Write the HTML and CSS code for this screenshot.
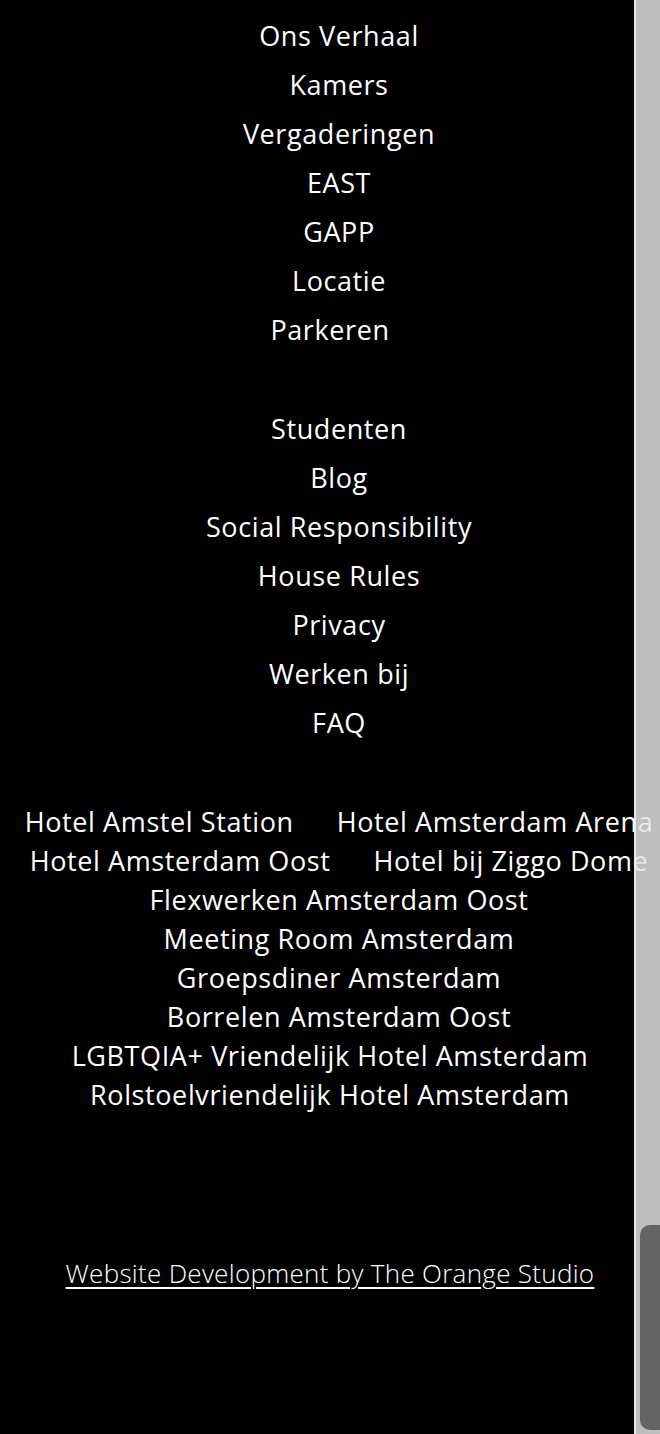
FILE: index.html
```html
<!DOCTYPE html>
<html lang="nl">
<head>
<meta charset="utf-8">
<title>Footer</title>
<link rel="stylesheet" href="styles.css">
</head>
<body>
<div class="page">
  <nav class="footer-nav">
    <ul class="menu">
      <li class="item shift"><a href="#">Ons Verhaal</a></li>
      <li class="item shift"><a href="#">Kamers</a></li>
      <li class="item shift"><a href="#">Vergaderingen</a></li>
      <li class="item shift"><a href="#">EAST</a></li>
      <li class="item shift"><a href="#">GAPP</a></li>
      <li class="item shift"><a href="#">Locatie</a></li>
      <li class="item"><a href="#">Parkeren</a></li>
    </ul>
    <ul class="menu menu-second">
      <li class="item shift"><a href="#">Studenten</a></li>
      <li class="item shift"><a href="#">Blog</a></li>
      <li class="item shift"><a href="#">Social Responsibility</a></li>
      <li class="item shift"><a href="#">House Rules</a></li>
      <li class="item shift"><a href="#">Privacy</a></li>
      <li class="item shift"><a href="#">Werken bij</a></li>
      <li class="item shift"><a href="#">FAQ</a></li>
    </ul>
    <div class="hotels">
      <div class="hotel-row shift"><a href="#">Hotel Amstel Station</a><a href="#">Hotel Amsterdam Arena</a></div>
      <div class="hotel-row shift"><a href="#">Hotel Amsterdam Oost</a><a href="#">Hotel bij Ziggo Dome</a></div>
      <div class="hotel-row shift"><a href="#">Flexwerken Amsterdam Oost</a></div>
      <div class="hotel-row shift"><a href="#">Meeting Room Amsterdam</a></div>
      <div class="hotel-row shift"><a href="#">Groepsdiner Amsterdam</a></div>
      <div class="hotel-row shift"><a href="#">Borrelen Amsterdam Oost</a></div>
      <div class="hotel-row"><a href="#">LGBTQIA+ Vriendelijk Hotel Amsterdam</a></div>
      <div class="hotel-row"><a href="#">Rolstoelvriendelijk Hotel Amsterdam</a></div>
    </div>
  </nav>
  <p class="credit"><a href="#">Website Development by The Orange Studio</a></p>
</div>
<div class="scrollbar"><div class="thumb"></div></div>
</body>
</html>
```

FILE: styles.css
```css
html, body {
  margin: 0;
  padding: 0;
  background: #000;
  height: 1434px;
  overflow: hidden;
}

body {
  position: relative;
  font-family: "Open Sans", "Noto Sans", sans-serif;
  color: #fff;
}

a {
  color: #fff;
  text-decoration: none;
}

.page {
  width: 660px;
  padding-top: 11px;
}

.menu {
  list-style: none;
  margin: 0;
  padding: 0;
}

.menu-second {
  margin-top: 50px;
}

.item {
  display: flex;
  justify-content: center;
  font-size: 27px;
  letter-spacing: 0.6px;
  line-height: 49px;
  white-space: nowrap;
}

.shift {
  padding-left: 18px;
}

.hotels {
  margin-top: 55px;
  display: flex;
  flex-direction: column;
}

.hotel-row {
  display: flex;
  justify-content: center;
  gap: 43px;
  font-size: 27px;
  letter-spacing: 0.6px;
  line-height: 39px;
  white-space: nowrap;
}

.credit {
  margin: 141px 0 0;
  text-align: center;
  font-size: 26px;
  font-weight: 300;
  letter-spacing: 0.3px;
  line-height: 36px;
}

.credit a {
  text-decoration: underline;
  text-underline-offset: 4px;
  text-decoration-thickness: 2px;
}

.scrollbar {
  position: absolute;
  top: 0;
  right: 0;
  width: 26px;
  height: 1434px;
  border-left: 2px solid rgba(236, 236, 236, 0.9);
  background: rgba(226, 226, 226, 0.84);
  display: flex;
  flex-direction: column;
  justify-content: flex-end;
  padding-bottom: 4px;
  box-sizing: border-box;
}

.thumb {
  margin-left: 4px;
  width: 20px;
  height: 205px;
  border-radius: 10px 0 0 10px;
  background: #646464;
}
```
